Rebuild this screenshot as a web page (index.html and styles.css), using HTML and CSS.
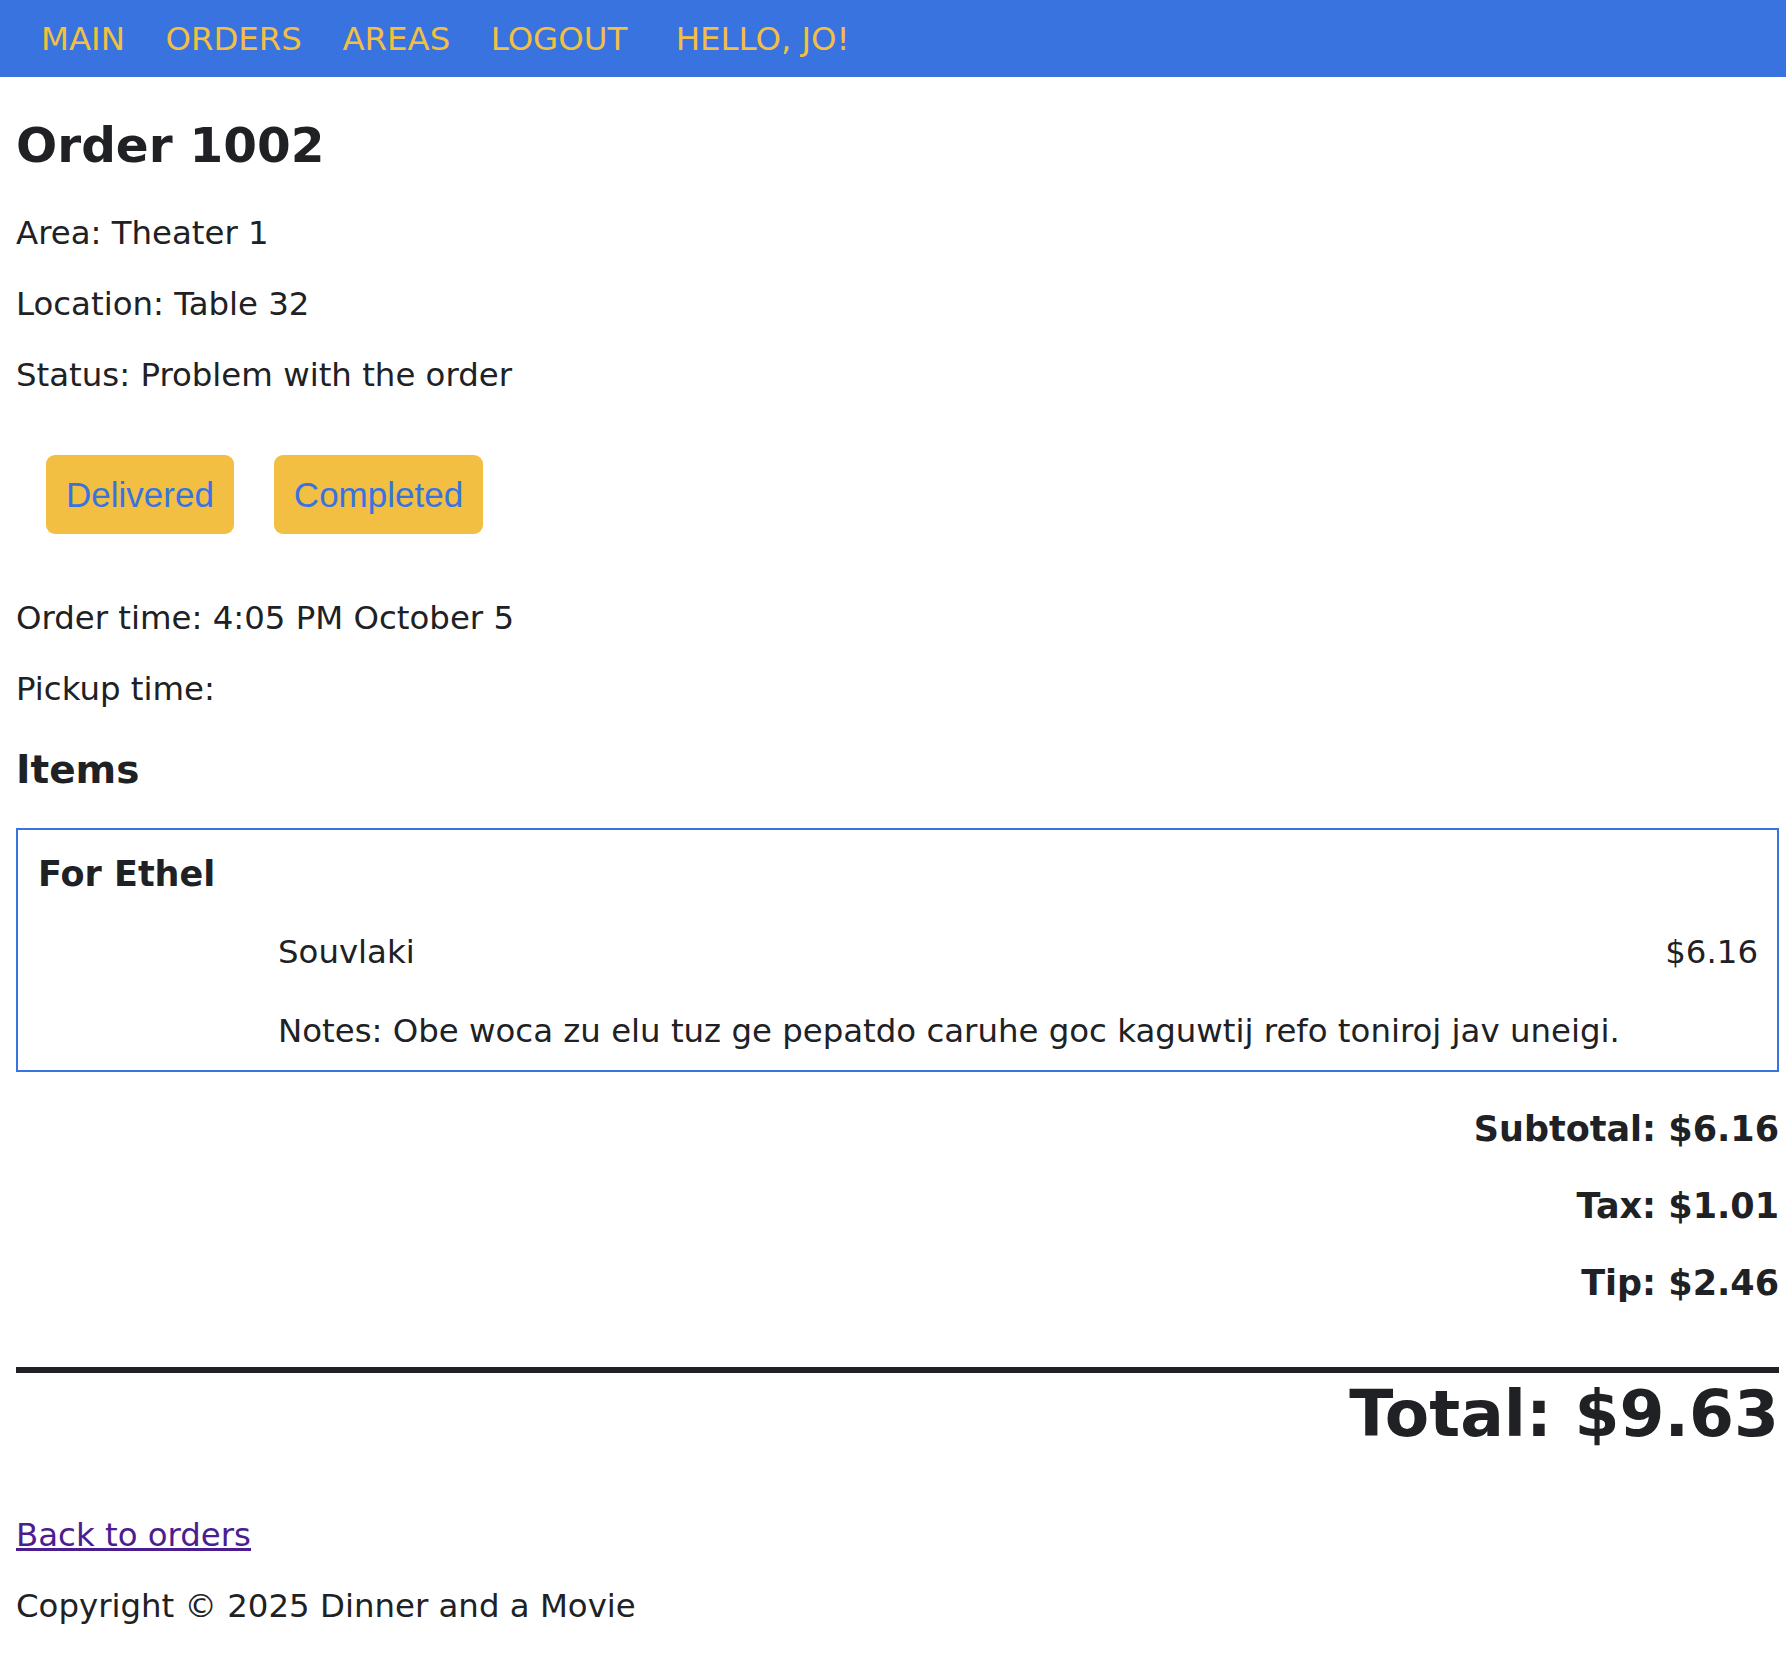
FILE: index.html
```html
<!DOCTYPE html>
<html lang="en">
<head>
<meta charset="utf-8">
<title>Order 1002</title>
<link rel="stylesheet" href="styles.css">
</head>
<body>
<nav class="topnav">
  <a class="nav-link" href="#">MAIN</a>
  <a class="nav-link" href="#">ORDERS</a>
  <a class="nav-link" href="#">AREAS</a>
  <a class="nav-link" href="#">LOGOUT</a>
  <span class="nav-hello">HELLO, JO!</span>
</nav>
<main class="page">
  <h1 class="title">Order 1002</h1>
  <p class="line">Area: Theater 1</p>
  <p class="line">Location: Table 32</p>
  <p class="line">Status: Problem with the order</p>
  <div class="actions">
    <button class="action-btn" type="button">Delivered</button>
    <button class="action-btn" type="button">Completed</button>
  </div>
  <p class="line">Order time: 4:05 PM October 5</p>
  <p class="line">Pickup time:</p>
  <h3 class="items-title">Items</h3>
  <section class="group">
    <h4 class="group-title">For Ethel</h4>
    <div class="item">
      <span class="item-name">Souvlaki</span>
      <span class="item-price">$6.16</span>
      <span class="item-notes">Notes: Obe woca zu elu tuz ge pepatdo caruhe goc kaguwtij refo toniroj jav uneigi.</span>
    </div>
  </section>
  <div class="totals">
    <p class="sum">Subtotal: $6.16</p>
    <p class="sum">Tax: $1.01</p>
    <p class="sum">Tip: $2.46</p>
  </div>
  <div class="grand">Total: $9.63</div>
  <p class="line"><a class="back" href="#">Back to orders</a></p>
  <p class="line">Copyright © 2025 Dinner and a Movie</p>
</main>
</body>
</html>
```
FILE: styles.css
```css
html, body {
  margin: 0;
  padding: 0;
  background: #ffffff;
}
body {
  font-family: "DejaVu Sans", Verdana, sans-serif;
  font-size: 32.4px;
  color: #202124;
}
.topnav {
  display: flex;
  align-items: center;
  gap: 40.5px;
  height: 77px;
  padding: 0 0 0 41px;
  background: #3873e0;
}
.nav-link, .nav-hello {
  color: #f2bf42;
  text-decoration: none;
  font-size: 32.4px;
  line-height: 38px;
}
.nav-hello {
  margin-left: 8px;
}
.page {
  padding: 0 7px 0 16px;
  overflow: hidden;
}
.title {
  font-size: 48.5px;
  font-weight: bold;
  margin: 40px 0 41px;
}
.line {
  margin: 33px 0;
  line-height: 38px;
}
.actions {
  display: flex;
  gap: 40px;
  padding-left: 30px;
  margin: 61px 0 65px;
}
.action-btn {
  font-family: "Liberation Sans", Arial, sans-serif;
  font-size: 35px;
  line-height: 41px;
  color: #3873e0;
  background: #f2bf42;
  border: none;
  border-radius: 9px;
  padding: 19px 20px;
  cursor: pointer;
}
.items-title {
  font-size: 39px;
  font-weight: bold;
  margin: 39px 0 35px;
  line-height: 46px;
}
.group {
  border: 2px solid #3873e0;
  padding: 0 19px 20px 20px;
}
.group-title {
  font-size: 35px;
  font-weight: bold;
  line-height: 41px;
  margin: 24px 0 38px;
}
.item {
  display: grid;
  grid-template-columns: 240px 1fr auto;
  row-gap: 41px;
  line-height: 38px;
}
.item-name {
  grid-column: 2;
}
.item-price {
  grid-column: 3;
  text-align: right;
}
.item-notes {
  grid-column: 2 / 4;
}
.totals {
  text-align: right;
  margin-top: 37px;
}
.sum {
  font-size: 35px;
  font-weight: bold;
  line-height: 41px;
  margin: 0 0 36px;
}
.grand {
  margin-top: 63px;
  border-top: 6px solid #202124;
  padding-top: 4px;
  font-size: 64.7px;
  font-weight: bold;
  line-height: 74px;
  text-align: right;
  margin-bottom: 65px;
}
.back {
  color: #4c1d8f;
  text-decoration: underline;
}
```
